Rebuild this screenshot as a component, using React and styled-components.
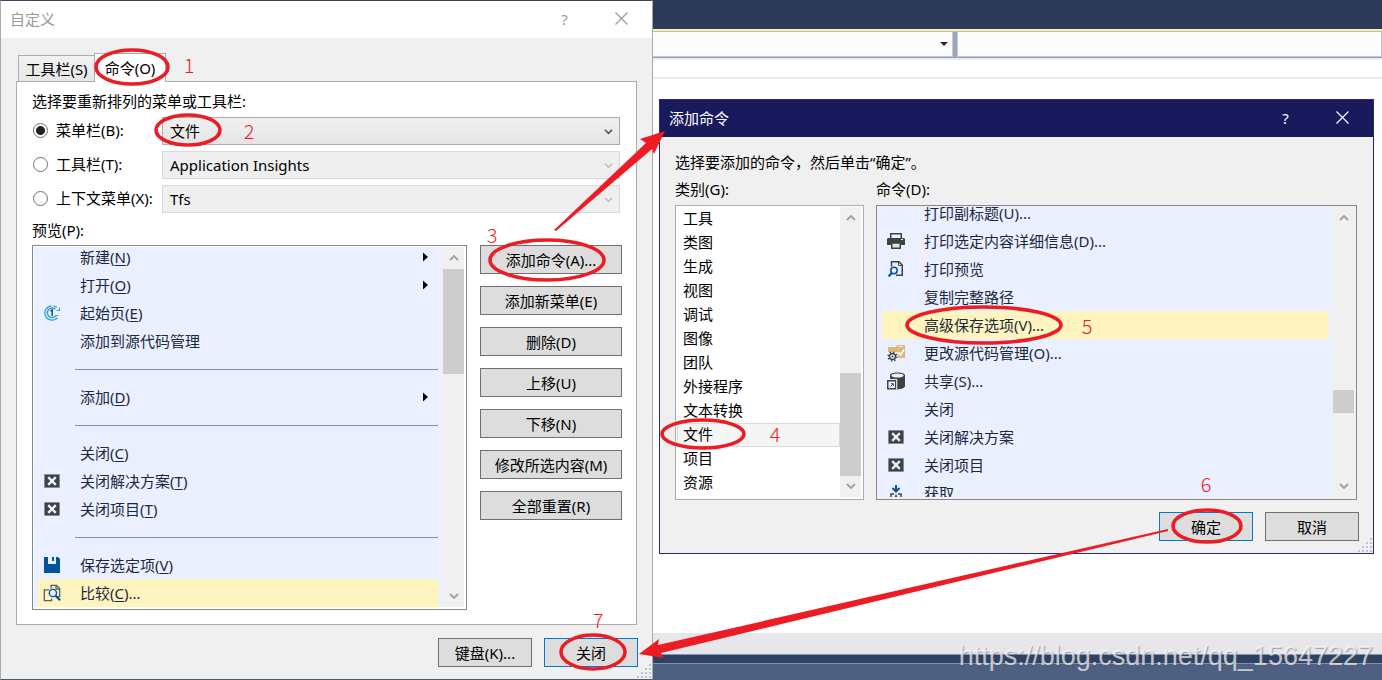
import React, { useState } from "react";
import styled, { createGlobalStyle, css } from "styled-components";

const GlobalStyle = createGlobalStyle`
  *, *::before, *::after { box-sizing: border-box; }
  body {
    margin: 0;
    font-family: "Noto Sans", "Noto Sans CJK SC", sans-serif;
    font-size: 15px;
    line-height: 20px;
    color: #000;
  }
  button, select, input { font: inherit; color: inherit; margin: 0; }
  ul { list-style: none; margin: 0; padding: 0; }
  u { text-underline-offset: 2px; text-decoration-thickness: 1px; }
`;

/* ---------- editor behind the dialogs ---------- */

const Desktop = styled.div`
  position: relative;
  display: flex;
  flex-direction: column;
  min-height: 100vh;
  min-width: 1374px;
  overflow: hidden;
  background: #fff;
`;
const MenuBand = styled.header`
  height: 31px;
  background: #2b3a56;
  border-bottom: 2px solid #fff0a0;
`;
const NavBar = styled.div`
  display: flex;
  gap: 4px;
  height: 27px;
  background: #9ba7b9;
  border-top: 1px solid #b5bccd;
  border-bottom: 1px solid #93a0b5;
`;
const NavCombo = styled.button`
  flex: ${(p) => p.$grow} 1 0;
  display: flex;
  align-items: center;
  justify-content: flex-end;
  padding: 0 4px;
  border: 0 solid #c0cbdc;
  border-width: 0 1px 1px;
  background: #fcfcfc;
`;
const Ruler = styled.div`
  height: 21px;
  border-top: 2px solid #ebecf2;
  border-bottom: 2px solid #e9e9f1;
`;
const EditorArea = styled.main`
  flex: 1;
`;
const EditorFoot = styled.div`
  height: 21px;
  background: #e7e7eb;
`;
const PanelBand = styled.div`
  height: 10px;
  background: #2f4262;
  border-top: 1px solid #8393b8;
  border-bottom: 1px solid #8393b8;
`;
const StatusBand = styled.div`
  height: 16px;
  background: #4d6082;
`;
const Watermark = styled.div`
  position: absolute;
  right: 9px;
  bottom: 8px;
  font: 27px/32px "Liberation Sans", sans-serif;
  color: rgba(255, 255, 255, 0.68);
  text-shadow: 1px 1px 1px rgba(90, 90, 100, 0.5);
`;

/* ---------- dialogs ---------- */

const Dialog = styled.section`
  position: absolute;
  display: flex;
  flex-direction: column;
  background: #f0f0f0;
`;
const CustomizeDialog = styled(Dialog)`
  top: 0;
  left: 0;
  width: 653px;
  border: 1px solid #a9a9a9;
  border-top-color: #42445a;
  border-bottom-color: #50556a;
`;
const AddDialog = styled(Dialog)`
  top: 99px;
  left: 659px;
  width: 715px;
  border: 1px solid #2a2a66;
`;
const TitleBar = styled.header`
  display: flex;
  align-items: center;
  height: 37px;
  padding: 0 2px 2px 9px;
  color: ${(p) => (p.$active ? "#fff" : "#999")};
  background: ${(p) => (p.$active ? "#191a5c" : "#fff")};
`;
const Title = styled.h1`
  flex: 1;
  margin: 0;
  font-size: 15px;
  font-weight: 400;
`;
const TitleButton = styled.button`
  display: flex;
  align-items: center;
  justify-content: center;
  width: 57px;
  height: 34px;
  padding: 0;
  border: 0;
  background: none;
`;
const CustomizeBody = styled.div`
  display: flex;
  flex-direction: column;
  padding: 15px 15px 12px;
`;
const TabStrip = styled.div`
  position: relative;
  display: flex;
  align-items: flex-end;
  height: 29px;
  padding-left: 2px;
`;
const Tab = styled.button`
  width: 76px;
  height: 27px;
  padding: 0;
  border: 1px solid #acacac;
  border-right: 0;
  background: linear-gradient(#f2f2f2, #e6e6e6);
  white-space: nowrap;
  ${(p) =>
    p.$selected &&
    css`
      width: 72px;
      height: 29px;
      border-right: 1px solid #acacac;
      border-bottom: 0;
      background: #fff;
    `}
`;
const TabPanel = styled.div`
  display: flex;
  flex-direction: column;
  margin-top: -1px;
  padding: 9px 14px 14px 15px;
  border: 1px solid #acacac;
  background: #fff;
`;
const Caption = styled.p`
  margin: 0;
`;
const BarRow = styled.div`
  display: flex;
  align-items: center;
  height: 28px;
  margin-top: 6px;
  padding-right: 2px;
`;
const RadioLabel = styled.label`
  display: flex;
  align-items: center;
  gap: 8px;
  width: 130px;
  padding-bottom: 2px;
  white-space: nowrap;
`;
const Radio = styled.input`
  appearance: none;
  flex: none;
  width: 15px;
  height: 15px;
  margin: 0 0 0 1px;
  border: 1px solid #707070;
  border-radius: 50%;
  background: #fff;
  &:checked {
    background: radial-gradient(circle, #222 0 4px, #fff 5px);
  }
`;
const SelectBox = styled.div`
  flex: 1;
  display: grid;
  align-items: center;
  > * { grid-area: 1 / 1; }
  > svg { justify-self: end; margin-right: 7px; pointer-events: none; }
`;
const Select = styled.select`
  appearance: none;
  width: 100%;
  height: 28px;
  padding: 0 24px 0 7px;
  border: 1px solid #acacac;
  border-radius: 0;
  background: linear-gradient(#f0f0f0, #e5e5e5);
  &:disabled {
    border-color: #d9d9d9;
    background: #efefef;
    color: #000;
    opacity: 1;
  }
`;
const PreviewLabel = styled(Caption)`
  margin-top: 7px;
`;
const PreviewRow = styled.div`
  display: flex;
  gap: 13px;
  margin-top: 5px;
`;
const ButtonColumn = styled.div`
  display: flex;
  flex-direction: column;
  gap: 12px;
`;
const PushButton = styled.button`
  width: ${(p) => (p.$wide ? 142 : 94)}px;
  height: 29px;
  padding: 0;
  border: 1px solid ${(p) => (p.$default ? "#0078d7" : "#707070")};
  background: #ddd;
  white-space: nowrap;
`;
const Footer = styled.footer`
  display: flex;
  justify-content: flex-end;
  gap: 12px;
`;
const CustomizeFooter = styled(Footer)`
  margin: 13px -1px 0 0;
`;
const GripCorner = styled.span`
  position: absolute;
  right: 1px;
  bottom: 1px;
  line-height: 0;
`;

/* ---------- lists ---------- */

const ListFrame = styled.div`
  display: flex;
  flex: ${(p) => p.$flex || "1 1 0"};
  min-width: 0;
  height: ${(p) => p.$height}px;
  padding: 1px 2px 2px 1px;
  border: 1px solid ${(p) => (p.$light ? "#acacac" : "#828790")};
  background: ${(p) => (p.$filled ? "#f0f0f0" : "#fff")};
`;
const MenuView = styled.ul`
  flex: 1;
  min-width: 0;
  overflow: hidden;
  padding: 0 4px;
  background: #eaf0ff;
  color: #1b293e;
`;
const MenuItem = styled.li`
  display: flex;
  align-items: center;
  height: 28px;
  padding-right: 11px;
  background: ${(p) => (p.$current ? "#fdf4bf" : "transparent")};
  &:first-child { margin-top: ${(p) => -p.$hidden}px; }
`;
const IconCell = styled.span`
  display: flex;
  justify-content: center;
  flex: none;
  width: 28px;
  margin-right: 14px;
`;
const MenuText = styled.span`
  flex: 1;
  white-space: nowrap;
`;
const Separator = styled.li`
  height: 28px;
  margin: 0 1px 0 37px;
  background: linear-gradient(#8c92a6, #8c92a6) 0 14px / 100% 1px no-repeat;
`;
const CategoryView = styled.ul`
  flex: 1;
  overflow: hidden;
`;
const Category = styled.li`
  height: 24px;
  padding: 0 5px;
  border: 1px solid ${(p) => (p.$current ? "#dadada" : "transparent")};
  background: ${(p) => (p.$current ? "#f5f5f5" : "transparent")};
`;
const Scrollbar = styled.div`
  display: flex;
  flex-direction: column;
  width: 21px;
  background: #f0f0f0;
`;
const ScrollArrow = styled.button`
  display: flex;
  align-items: center;
  justify-content: center;
  height: 22px;
  padding: 0;
  border: 0;
  background: none;
`;
const ScrollTrack = styled.div`
  flex: 1;
  padding-top: ${(p) => p.$offset}px;
`;
const ScrollThumb = styled.div`
  height: ${(p) => p.$size}px;
  background: #cdcdcd;
`;

const AddBody = styled.div`
  display: flex;
  flex-direction: column;
  padding: 15px 14px 12px 15px;
`;
const ListColumns = styled.div`
  display: flex;
  gap: 12px;
  padding-right: 2px;
`;
const ListColumn = styled.div`
  display: flex;
  flex-direction: column;
  flex: ${(p) => p.$flex};
  gap: 6px;
  padding-top: 7px;
`;
const AddFooter = styled(Footer)`
  margin-top: 12px;
`;

/* ---------- red marks over the dialogs ---------- */

const MarkLayer = styled.svg`
  position: absolute;
  top: 0;
  left: 0;
  width: 1382px;
  height: 680px;
  pointer-events: none;
`;
const Ring = styled.ellipse`
  fill: none;
  stroke: #ed1c24;
  stroke-width: 3.6;
`;
const Arrow = styled.polygon`
  fill: #ed1c24;
`;
const StepNumber = styled.text`
  fill: #ed1c24;
  font-family: "Noto Sans CJK SC", sans-serif;
  font-size: 20px;
  font-weight: 300;
  text-anchor: middle;
`;

/* ---------- drawings ---------- */

const Chevron = ({ up, color = "#a0a0a0", size = 10 }) => (
  <svg width={size} height={size} viewBox="0 0 10 10" aria-hidden="true">
    <path d={up ? "M1 7L5 3L9 7" : "M1 3L5 7L9 3"} fill="none" stroke={color} strokeWidth="1.8" />
  </svg>
);
const CrossIcon = () => (
  <svg width="13" height="13" viewBox="0 0 13 13" aria-hidden="true">
    <path d="M.5.5l12 12M12.5.5l-12 12" stroke="currentColor" strokeWidth="1.2" />
  </svg>
);
const SubmenuArrow = () => (
  <svg width="5" height="10" viewBox="0 0 5 10" aria-hidden="true">
    <path d="M0 0.5L5 5L0 9.5z" fill="#000" />
  </svg>
);
const Grip = () => (
  <GripCorner aria-hidden="true">
    <svg width="14" height="14" viewBox="0 0 14 14" fill="#bcc3d8">
      {[[12, 0], [8, 4], [12, 4], [4, 8], [8, 8], [12, 8], [0, 12], [4, 12], [8, 12], [12, 12]].map(([x, y]) => (
        <rect key={`${x}-${y}`} x={x} y={y} width="2" height="2" />
      ))}
    </svg>
  </GripCorner>
);

const glyphs = {
  start: (
    <svg width="16" height="16" viewBox="0 0 16 16" fill="none" stroke="#35a3dc">
      <path d="M12.800 2.600A7.200 7.200 0 0 0 9.500 .900M7.500 .800A7.200 7.200 0 1 0 13.500 12.700" strokeWidth="1.300" />
      <path d="M11.300 4.200A4.800 4.800 0 1 0 12.400 10" strokeWidth="1.500" />
      <path d="M12.500 5.500h3V2.500M12 10.500h2.500" strokeWidth="1.200" />
      <path d="M6.500 6L8.200 5v6" stroke="#444" strokeWidth="1.500" />
    </svg>
  ),
  close: (
    <svg width="16" height="14" viewBox="0 0 16 14">
      <path d="M0 0h16v14H0z" fill="#a9acb8" />
      <path d="M.7.7h14.600v12.600H.7z" fill="#424242" />
      <path d="M4.200 3.200l7.600 7.600M11.800 3.200l-7.600 7.600" stroke="#eaf0ff" strokeWidth="2.400" />
    </svg>
  ),
  save: (
    <svg width="16" height="16" viewBox="0 0 16 16">
      <path d="M0 0h4v7h8V0h2l2 2v14H0z" fill="#00539c" />
      <path d="M8 0h2v4H8z" fill="#00539c" />
    </svg>
  ),
  compare: (
    <svg width="18" height="18" viewBox="0 0 20 20" fill="none">
      <path d="M9 5V1.500h6L18.500 5v9h-3M14.500 1.500v4h4" stroke="#5d6068" strokeWidth="1.500" />
      <path d="M7 6.500H1.500v12h8V16" stroke="#5d6068" strokeWidth="1.500" />
      <circle cx="11" cy="10" r="4" fill="#eaf0ff" stroke="#00539c" strokeWidth="1.500" />
      <path d="M14 13l5 5" stroke="#00539c" strokeWidth="2.500" />
    </svg>
  ),
  print: (
    <svg width="18" height="16" viewBox="0 0 18 16">
      <path d="M3.750 5V.750h10.500V5" fill="#eaf0ff" stroke="#424242" strokeWidth="1.500" />
      <path d="M1 5h16l1 1v6H0V6z" fill="#424242" />
      <path d="M14 6.500h2" stroke="#eaf0ff" />
      <path d="M4.750 10h8.500v5.250h-8.500z" fill="#e0e2e8" stroke="#424242" strokeWidth="1.500" />
    </svg>
  ),
  preview: (
    <svg width="16" height="16" viewBox="0 0 16 16" fill="none">
      <path d="M3.500 5.500V.750H11L14.250 4v10.250H8" stroke="#424242" strokeWidth="1.500" />
      <path d="M10.500 1v3.500H14" stroke="#424242" />
      <circle cx="6" cy="9.500" r="3.200" stroke="#00539c" strokeWidth="1.500" />
      <path d="M3.800 12L.600 15.400" stroke="#00539c" strokeWidth="2.200" />
    </svg>
  ),
  source: (
    <svg width="18" height="18" viewBox="0 0 18 18" fill="none">
      <path d="M1 3h8l1-2h8v13h-7V8H1z" fill="#dcb67a" />
      <path d="M11 2.500h5" stroke="#eaf0ff" />
      <path d="M11.500 8.500l2 2.500L17 5.500" stroke="#fff" strokeWidth="1.500" />
      <circle cx="5.500" cy="12.500" r="3" fill="#eaf0ff" stroke="#424242" strokeWidth="1.400" />
      <circle cx="5.500" cy="12.500" r="4.400" stroke="#424242" strokeWidth="1.400" strokeDasharray="1.500 1.956" />
      <circle cx="5.500" cy="12.500" r=".9" fill="#424242" />
    </svg>
  ),
  share: (
    <svg width="18" height="18" viewBox="0 0 18 18" fill="none">
      <path d="M3 3.500C3 1.500 6 .500 10.500 .500S18 1.500 18 3.500V14c0 2-3 3-8 3.500V7H3z" fill="#424242" />
      <ellipse cx="10.500" cy="3.500" rx="6.200" ry="2" fill="#eaf0ff" />
      <path d="M.750 8.750h8v8h-8z" fill="#eaf0ff" stroke="#424242" strokeWidth="1.500" />
      <path d="M9.750 7.500v10" stroke="#eaf0ff" />
      <path d="M3.500 14.500L6 12M4 11.700h2.300V14" stroke="#424242" />
    </svg>
  ),
  fetch: (
    <svg width="12" height="16" viewBox="0 0 12 16" fill="none">
      <path d="M6 0v6M2.500 3L6 6.500L9.500 3" stroke="#00539c" strokeWidth="2" />
      <path d="M1 12V9h3M11 12V9H8M6 9.500v3" stroke="#424242" strokeWidth="1.500" />
      <path d="M2.500 16c0-5 7-5 7 0" stroke="#424242" strokeWidth="1.500" />
    </svg>
  ),
};

/* ---------- data ---------- */

const previewItems = [
  { text: "新建", key: "N", sub: true },
  { text: "打开", key: "O", sub: true },
  { text: "起始页", key: "E", icon: "start" },
  { text: "添加到源代码管理" },
  null,
  { text: "添加", key: "D", sub: true },
  null,
  { text: "关闭", key: "C" },
  { text: "关闭解决方案", key: "T", icon: "close" },
  { text: "关闭项目", key: "T", icon: "close" },
  null,
  { text: "保存选定项", key: "V", icon: "save" },
  { text: "比较", key: "C", tail: "...", icon: "compare", current: true },
];
const commandItems = [
  { text: "打印副标题(U)..." },
  { text: "打印选定内容详细信息(D)...", icon: "print" },
  { text: "打印预览", icon: "preview" },
  { text: "复制完整路径" },
  { text: "高级保存选项(V)...", current: true },
  { text: "更改源代码管理(O)...", icon: "source" },
  { text: "共享(S)...", icon: "share" },
  { text: "关闭" },
  { text: "关闭解决方案", icon: "close" },
  { text: "关闭项目", icon: "close" },
  { text: "获取", icon: "fetch" },
];
const categories = ["工具", "类图", "生成", "视图", "调试", "图像", "团队", "外接程序", "文本转换", "文件", "项目", "资源"];
const actions = ["添加命令(A)...", "添加新菜单(E)", "删除(D)", "上移(U)", "下移(N)", "修改所选内容(M)", "全部重置(R)"];
const bars = [
  { id: "menu", label: "菜单栏(B):", value: "文件" },
  { id: "tool", label: "工具栏(T):", value: "Application Insights" },
  { id: "context", label: "上下文菜单(X):", value: "Tfs" },
];
const rings = [
  [132, 67, 36, 17],
  [188, 130, 32, 15],
  [547, 260, 57, 20],
  [703, 434, 41, 14],
  [984, 325, 77, 18],
  [1207, 526, 34, 16],
  [593, 652, 32, 17],
];
const steps = [
  [189, 73], [249, 139], [492, 243], [775, 442], [1087, 334], [1206, 492], [598, 628],
];

function Scroll({ offset, size }) {
  return (
    <Scrollbar>
      <ScrollArrow aria-label="向上滚动"><Chevron up /></ScrollArrow>
      <ScrollTrack $offset={offset}><ScrollThumb $size={size} /></ScrollTrack>
      <ScrollArrow aria-label="向下滚动"><Chevron /></ScrollArrow>
    </Scrollbar>
  );
}

function MenuList({ items, hidden, label }) {
  return (
    <MenuView role="listbox" aria-label={label}>
      {items.map((item, i) =>
        item ? (
          <MenuItem key={i} role="option" aria-selected={!!item.current} $current={item.current} $hidden={hidden}>
            <IconCell>{item.icon && glyphs[item.icon]}</IconCell>
            <MenuText>
              {item.text}
              {item.key && <>(<u>{item.key}</u>)</>}
              {item.tail}
            </MenuText>
            {item.sub && <SubmenuArrow />}
          </MenuItem>
        ) : (
          <Separator key={i} role="separator" />
        )
      )}
    </MenuView>
  );
}

function Customize() {
  const [bar, setBar] = useState("menu");
  return (
    <CustomizeDialog role="dialog" aria-label="自定义">
      <TitleBar>
        <Title>自定义</Title>
        <TitleButton aria-label="帮助">?</TitleButton>
        <TitleButton aria-label="关闭窗口"><CrossIcon /></TitleButton>
      </TitleBar>
      <CustomizeBody>
        <TabStrip role="tablist">
          <Tab role="tab" aria-selected="false">工具栏(S)</Tab>
          <Tab role="tab" aria-selected="true" $selected>命令(O)</Tab>
        </TabStrip>
        <TabPanel role="tabpanel">
          <Caption>选择要重新排列的菜单或工具栏:</Caption>
          {bars.map((b) => (
            <BarRow key={b.id}>
              <RadioLabel>
                <Radio type="radio" name="bar" checked={bar === b.id} onChange={() => setBar(b.id)} />
                {b.label}
              </RadioLabel>
              <SelectBox>
                <Select aria-label={b.label} disabled={bar !== b.id}>
                  <option>{b.value}</option>
                </Select>
                <Chevron size={9} color={bar === b.id ? "#555" : "#bfbfbf"} />
              </SelectBox>
            </BarRow>
          ))}
          <PreviewLabel>预览(P):</PreviewLabel>
          <PreviewRow>
            <ListFrame $height={365}>
              <MenuList items={previewItems} hidden={4} label="预览" />
              <Scroll offset={0} size={105} />
            </ListFrame>
            <ButtonColumn>
              {actions.map((a) => (
                <PushButton key={a} $wide>{a}</PushButton>
              ))}
            </ButtonColumn>
          </PreviewRow>
        </TabPanel>
        <CustomizeFooter>
          <PushButton>键盘(K)...</PushButton>
          <PushButton $default>关闭</PushButton>
        </CustomizeFooter>
      </CustomizeBody>
      <Grip />
    </CustomizeDialog>
  );
}

function AddCommand() {
  const [category, setCategory] = useState("文件");
  return (
    <AddDialog role="dialog" aria-label="添加命令">
      <TitleBar $active>
        <Title>添加命令</Title>
        <TitleButton aria-label="帮助">?</TitleButton>
        <TitleButton aria-label="关闭窗口"><CrossIcon /></TitleButton>
      </TitleBar>
      <AddBody>
        <Caption>选择要添加的命令，然后单击“确定”。</Caption>
        <ListColumns>
          <ListColumn $flex="0 0 189px">
            <Caption>类别(G):</Caption>
            <ListFrame $flex="none" $height={295} $light>
              <CategoryView role="listbox" aria-label="类别">
                {categories.map((c) => (
                  <Category key={c} role="option" aria-selected={c === category} $current={c === category} onClick={() => setCategory(c)}>
                    {c}
                  </Category>
                ))}
              </CategoryView>
              <Scroll offset={144} size={103} />
            </ListFrame>
          </ListColumn>
          <ListColumn $flex="1 1 0">
            <Caption>命令(D):</Caption>
            <ListFrame $flex="none" $height={295} $filled>
              <MenuList items={commandItems} hidden={8} label="命令" />
              <Scroll offset={161} size={23} />
            </ListFrame>
          </ListColumn>
        </ListColumns>
        <AddFooter>
          <PushButton $default>确定</PushButton>
          <PushButton>取消</PushButton>
        </AddFooter>
      </AddBody>
      <Grip />
    </AddDialog>
  );
}

export default function App() {
  return (
    <Desktop>
      <GlobalStyle />
      <MenuBand />
      <NavBar>
        <NavCombo $grow={943} aria-label="类型">
          <svg width="8" height="4" viewBox="0 0 8 4" aria-hidden="true"><path d="M0 0h8L4 4z" fill="#1b293e" /></svg>
        </NavCombo>
        <NavCombo $grow={415} aria-label="成员" />
      </NavBar>
      <Ruler />
      <EditorArea />
      <EditorFoot />
      <PanelBand />
      <StatusBand />
      <Customize />
      <AddCommand />
      <MarkLayer viewBox="0 0 1382 680">
        <Arrow points="554,230 646,143 640,139 665,131 654,154 652,149 556,231" />
        <Arrow points="1168,529 658,645 659,639 639,654 664,658 661,653 1168,531" />
        {rings.map(([cx, cy, rx, ry]) => (
          <Ring key={cx} cx={cx} cy={cy} rx={rx} ry={ry} />
        ))}
        {steps.map(([x, y], i) => (
          <StepNumber key={x} x={x} y={y}>{i + 1}</StepNumber>
        ))}
      </MarkLayer>
      <Watermark>https://blog.csdn.net/qq_15647227</Watermark>
    </Desktop>
  );
}
